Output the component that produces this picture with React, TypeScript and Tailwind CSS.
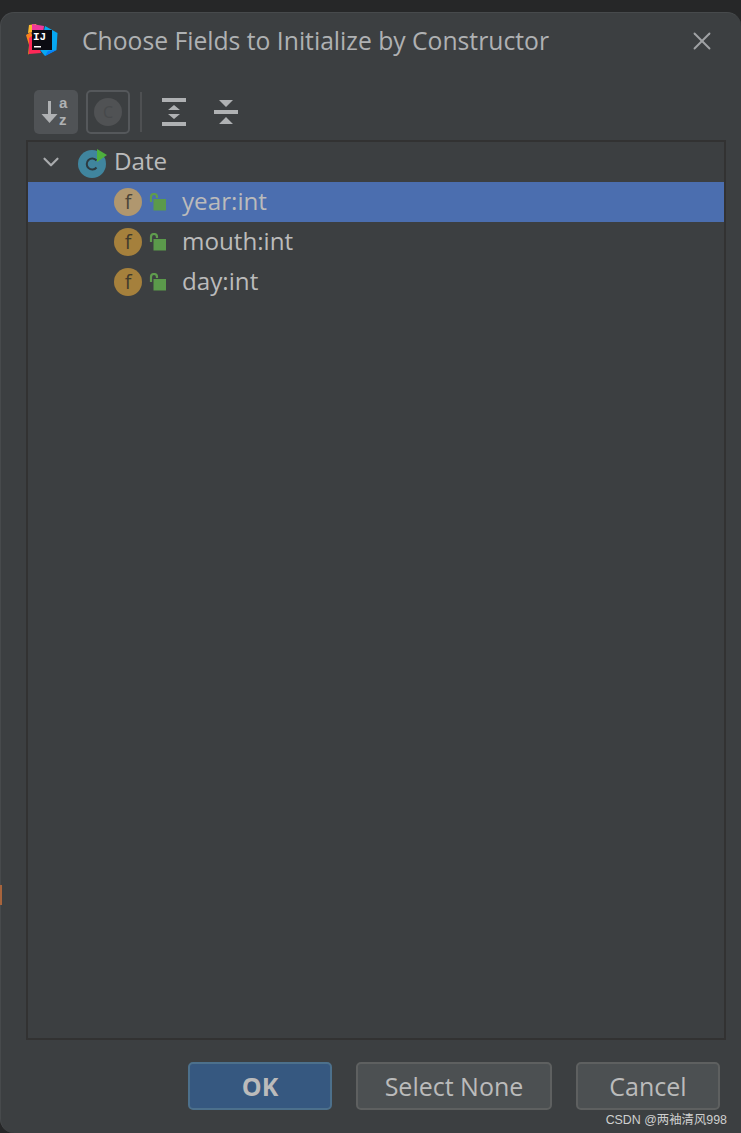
import React from 'react';
import { ChevronDown, X } from 'lucide-react';

const uiFont = { fontFamily: '"Open Sans", "Noto Sans", sans-serif' };

const JetBrainsLogo = () => (
  <svg width="34" height="34" viewBox="0 0 34 34" className="shrink-0">
    <polygon points="19,2 31.5,9 30.5,26 19,32 14,26" fill="#07a8f2" />
    <polygon points="22,27 30.5,26 19,32" fill="#087cfa" />
    <polygon points="3,1 10,0 13,7 2,9" fill="#fdb82e" />
    <polygon points="6,0 18,2 17,9 6,11" fill="#f0389b" />
    <polygon points="0,11 5,8 9,20 2,31 3,21" fill="#fc801d" />
    <polygon points="3,14 9,10 15,29 3,30" fill="#fe2857" />
    <rect x="6" y="6" width="20" height="20" fill="#0b0b12" />
    <text x="7" y="16" fill="#fff" fontSize="11" fontWeight="700" fontFamily="Liberation Mono, monospace">IJ</text>
    <rect x="8" y="22" width="7" height="1.5" fill="#fff" />
  </svg>
);

const SortIcon = () => (
  <svg width="32" height="36" viewBox="0 -2 32 36">
    <path d="M9.5 5v18" stroke="#afb1b3" strokeWidth="3" />
    <path d="M1.5 18h16l-8 9z" fill="#afb1b3" />
    <text x="19" y="12" fill="#afb1b3" fontSize="15" fontWeight="700" fontFamily="Liberation Sans, sans-serif">a</text>
    <text x="19" y="29" fill="#afb1b3" fontSize="15" fontWeight="700" fontFamily="Liberation Sans, sans-serif">z</text>
  </svg>
);

const ExpandIcon = () => (
  <svg width="24" height="28" viewBox="0 0 24 28">
    <rect width="24" height="4" fill="#afb1b3" />
    <rect y="24" width="24" height="4" fill="#afb1b3" />
    <path d="M12 7l6 5H6zM12 21l-6-5h12z" fill="#afb1b3" />
  </svg>
);

const CollapseIcon = () => (
  <svg width="24" height="24" viewBox="0 0 24 24">
    <rect y="10" width="24" height="4" fill="#afb1b3" />
    <path d="M5 0h14l-7 7zM5 24h14l-7-7z" fill="#afb1b3" />
  </svg>
);

const ClassIcon = () => (
  <svg width="32" height="32" viewBox="0 0 32 32" className="shrink-0">
    <circle cx="15" cy="18" r="14" fill="#40859e" />
    <path d="M19.5 14.5a5.5 5.5 0 1 0 0 7" stroke="#2d3a40" strokeWidth="2" fill="none" />
    <polygon points="20,3 30,9 20,16" fill="#4eb03d" />
  </svg>
);

const FieldIcon = ({ selected }: { selected?: boolean }) => (
  <div
    className={`w-7 h-7 rounded-full flex items-center justify-center text-[20px] leading-none shrink-0 ${
      selected ? 'bg-[#b0976f] text-[#4a4438]' : 'bg-[#a5803c] text-[#3f3a2c]'
    }`}
    style={{ fontFamily: '"Open Sans", sans-serif' }}
  >
    f
  </div>
);

const LockIcon = () => (
  <svg width="18" height="18" viewBox="0 0 18 18" className="shrink-0">
    <path d="M2 9V4a3 3 0 0 1 6 0v1" stroke="#5f9c4d" strokeWidth="2.2" fill="none" />
    <rect x="4.5" y="6" width="12.5" height="11.5" fill="#5b9a4b" />
  </svg>
);

const fields = [
  { name: 'year:int', selected: true },
  { name: 'mouth:int' },
  { name: 'day:int' },
];

export default function App() {
  return (
    <div className="relative w-[741px] h-[1133px] overflow-hidden bg-[#262728] pt-3 text-[#bbbbbb]" style={uiFont}>
      <div className="flex flex-col h-full bg-[#3c3f41] rounded-[14px] rounded-br-none border-l border-t border-[#474a4c]">
        {/* Title bar */}
        <div className="flex items-center h-[56px] pl-[25px] pr-[24px] shrink-0">
          <JetBrainsLogo />
          <span className="ml-[22px] text-[24.7px] leading-none text-[#afb1b3] whitespace-nowrap">
            Choose Fields to Initialize by Constructor
          </span>
          <X className="ml-auto text-[#a0a2a4]" size={30} strokeWidth={1.5} />
        </div>

        {/* Toolbar */}
        <div className="flex items-center h-[44px] mt-[21px] ml-[33px] shrink-0">
          <div className="w-11 h-11 rounded-[5px] bg-[#505356] flex items-center justify-center">
            <SortIcon />
          </div>
          <div className="w-11 h-11 ml-2 rounded-[5px] border-2 border-[#55585b] flex items-center justify-center">
            <div className="w-7 h-7 rounded-full bg-[#505254] flex items-center justify-center text-[16px] leading-none text-[#47494b]">
              C
            </div>
          </div>
          <div className="w-0.5 h-10 ml-[10px] bg-[#4e5052]" />
          <div className="ml-5 flex items-center"><ExpandIcon /></div>
          <div className="ml-7 flex items-center"><CollapseIcon /></div>
        </div>

        {/* Tree */}
        <div className="flex-1 mt-1.5 ml-[25px] mr-[15px] border-2 border-[#323232]">
          <div className="flex items-center h-10 pl-[10px]">
            <ChevronDown className="text-[#a9abad]" size={26} strokeWidth={2} />
            <div className="ml-[13px]"><ClassIcon /></div>
            <span className="ml-[5px] pb-[2px] text-[24.2px] leading-none text-[#bbbbbb]">Date</span>
          </div>
          {fields.map((field) => (
            <div
              key={field.name}
              className={`flex items-center h-10 pl-[86px] ${field.selected ? 'bg-[#4b6eaf]' : ''}`}
            >
              <FieldIcon selected={field.selected} />
              <div className="ml-[7px]"><LockIcon /></div>
              <span className="ml-[15px] pb-[2px] text-[24.2px] leading-none text-[#bbbbbb]">{field.name}</span>
            </div>
          ))}
        </div>

        {/* Buttons */}
        <div className="flex justify-end items-center h-[48px] mt-[22px] mb-[23px] mr-[21px] shrink-0 gap-6">
          <button className="w-36 h-12 pt-[2px] rounded-[5px] bg-[#365880] border-2 border-[#4c708c] text-[25px] font-bold text-[#bbbbbb]">
            OK
          </button>
          <button className="w-[196px] h-12 pt-[2px] rounded-[5px] bg-[#4c5052] border-2 border-[#5e6060] text-[25px] text-[#bbbbbb]">
            Select None
          </button>
          <button className="w-36 h-12 pt-[2px] rounded-[5px] bg-[#4c5052] border-2 border-[#5e6060] text-[25px] text-[#bbbbbb]">
            Cancel
          </button>
        </div>
      </div>

      {/* Watermark */}
      <span
        className="absolute right-[14px] bottom-[5px] text-[12.4px] leading-4 text-[#cfcfcf]"
        style={{ fontFamily: '"Liberation Sans", "Noto Sans CJK SC", sans-serif' }}
      >
        CSDN @两袖清风998
      </span>
      {/* Sliver of the window behind */}
      <div className="absolute left-0 top-[885px] w-0.5 h-5 bg-[#a8643c]" />
    </div>
  );
}
